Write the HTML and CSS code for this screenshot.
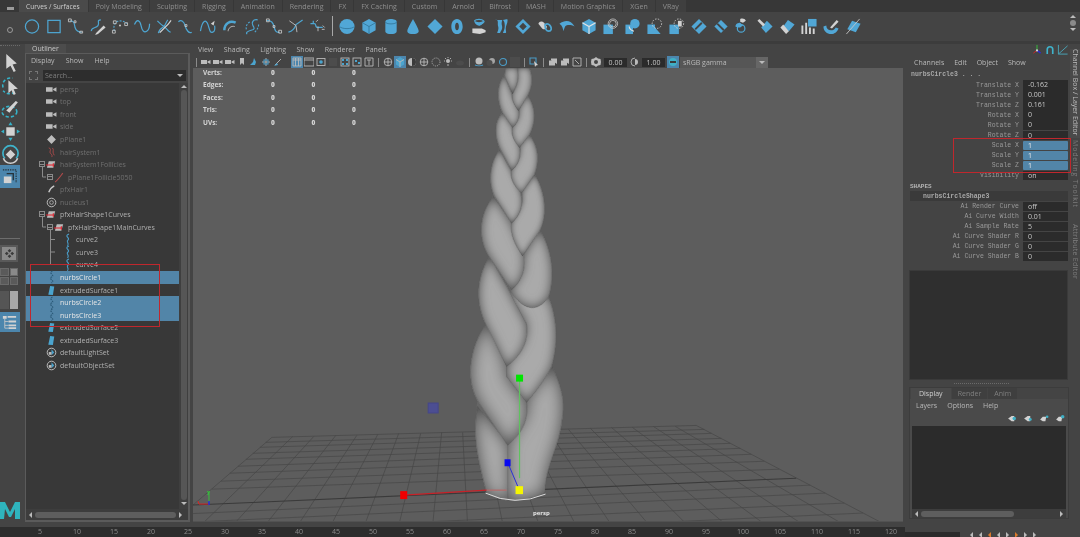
FILE: index.html
```html
<!DOCTYPE html>
<html lang="en">
<head>
<meta charset="utf-8">
<title>Maya</title>
<link rel="stylesheet" href="styles.css">
</head>
<body>
<svg class="defs" width="0" height="0" aria-hidden="true">
  <defs>
    <symbol id="cam" viewBox="0 0 10 10"><path class="g" d="M0 3h6v4H0zM6.500 4.500 9.500 3v4L6.500 5.500z"/></symbol>
    <symbol id="cv" viewBox="0 0 10 14"><path class="bl" d="M6.500 1C1 3 8 5 5.500 7 3 9 7.500 10 5 13"/></symbol>
    <symbol id="wave" viewBox="0 0 10 14"><path class="tl" d="M6 1C1 3 9 5 5 7 1 9 9 10 5 13"/></symbol>
    <symbol id="surf" viewBox="0 0 10 12"><path class="bf" d="M3.500 1 8 1.500 6.500 11 1.500 10.500z"/></symbol>
    <symbol id="setic" viewBox="0 0 12 12"><circle class="ring" cx="6" cy="6" r="4.700"/><path class="bf" d="M6 2.500 9 6 6 9z"/><path class="g" d="M3 5.500h3v3H3z"/></symbol>
    <symbol id="pfx" viewBox="0 0 12 10"><path class="g" d="M3 1.500h7L8 8.500H1z"/><path class="rd" d="M0 5.500h8M8 3.500v4"/></symbol>
    <symbol id="pick" viewBox="0 0 10 10"><path class="g" d="M1 3.500h6v5H1zM3 3V1.500h6V7"/></symbol>
    <symbol id="dot" viewBox="0 0 10 10"><rect class="gl" x="1" y="1.500" width="8" height="7"/><circle class="bf" cx="5" cy="5" r="1.800"/></symbol>
    <symbol id="wire" viewBox="0 0 10 10"><circle class="gl" cx="5" cy="5" r="3.800"/><path class="gl" d="M1 5h8M5 1v8"/></symbol>
  </defs>
</svg>
<div class="app">
  <nav class="tabs">
    <span class="tab active">Curves / Surfaces</span><span class="tab">Poly Modeling</span><span class="tab">Sculpting</span><span class="tab">Rigging</span><span class="tab">Animation</span><span class="tab">Rendering</span><span class="tab">FX</span><span class="tab">FX Caching</span><span class="tab">Custom</span><span class="tab">Arnold</span><span class="tab">Bifrost</span><span class="tab">MASH</span><span class="tab">Motion Graphics</span><span class="tab">XGen</span><span class="tab">VRay</span>
  </nav>
  <div class="shelf">
    <div class="shelf-side"><i class="menu-bars"></i><i class="gear"></i></div>
    <div class="shelf-icons">
      <svg viewBox="0 0 18 18"><circle class="s" cx="9" cy="9" r="7"/></svg>
      <svg viewBox="0 0 18 18"><rect class="s" x="2.500" y="2.500" width="13" height="13"/></svg>
      <svg viewBox="0 0 18 18"><path class="s" d="M3 3c5 0 4 4 5 7 1 3 4 5 7 5"/><path class="wt" d="M1 1h3v3H1zM7 3h2v2H7zM13 14h3v2h-3z"/></svg>
      <svg viewBox="0 0 18 18"><path class="s" d="M2 14c-1-4 5-3 7-6 2-3-2-6 3-6"/><path class="wf" d="m7 16 8-8 2 2-8 7-3 1z"/></svg>
      <svg viewBox="0 0 18 18"><path class="dash" d="M3 14C1 6 6 3 9 3s5 1 7 3"/><path class="wt" d="M1 13h3v3H1zM2 3h3v3H2zM14 5h3v3h-3z"/><circle class="wf" cx="9" cy="8" r="1"/></svg>
      <svg viewBox="0 0 18 18"><path class="s" d="M1 7c3-7 6-4 7 1s3 8 6 6 3-6 3-8"/></svg>
      <svg viewBox="0 0 18 18"><path class="s" d="M2 3c4 4 5 5 7 6s5 6 7 6M3 16c1-5 5-6 6-7s3-6 4-7"/><path class="wf" d="m4 15 9-9 3-4 1 1-3 4-9 9z"/></svg>
      <svg viewBox="0 0 18 18"><path class="s" d="M1 4c3-3 6 0 7 4s4 9 7 7"/><path class="wt" d="M8 7h2v2H8z"/></svg>
      <svg viewBox="0 0 18 18"><path class="s" d="M1 14C3 2 7 1 9 7s2 9 5 8 2-7 2-7"/><path class="wf" d="m12 6 4-3-1 5z"/></svg>
      <svg viewBox="0 0 18 18"><path class="thick" d="M3 13C3 6 9 2 15 5"/><path class="wt" d="M7 14c0-3 3-6 7-5"/></svg>
      <svg viewBox="0 0 18 18"><path class="s" d="M15 2c-5-1-7 3-5 6s2 4-2 5-6 3-4 4"/><path class="dash" d="M3 12c-1-5 3-8 5-8M16 7c0 4-3 7-5 9"/></svg>
      <svg viewBox="0 0 18 18"><path class="s" d="M1 3c5-1 7 2 8 6s2 7 6 6"/><path class="wt" d="M1 1h3v3H1zM14 13h3v3h-3zM8 8h2v2H8z"/></svg>
      <svg viewBox="0 0 18 18"><path class="s" d="M1 15c4-1 7-5 8-8l7-5"/><path class="wt" d="m2 3 7 5 1 7"/></svg>
      <svg viewBox="0 0 18 18"><path class="s" d="M1 6h4c3 0 0 4 4 4h5M4 3v3"/><path class="wt" d="M9 9v5M13 12h3M14 8l2 2M7 4l2-2"/></svg>
      <i class="shelf-sep"></i>
      <svg viewBox="0 0 18 18"><ellipse class="f" cx="9" cy="9" rx="8" ry="8"/><path class="edge" d="M1 9c3 3 13 3 16 0"/></svg>
      <svg viewBox="0 0 18 18"><path class="f" d="m9 1 7 4v8l-7 4-7-4V5z"/><path class="edge" d="m2 5 7 4 7-4M9 9v8"/></svg>
      <svg viewBox="0 0 18 18"><path class="f" d="M3 4c0-4 12-4 12 0v10c0 4-12 4-12 0z"/><path class="edge" d="M3 4c0 3 12 3 12 0"/></svg>
      <svg viewBox="0 0 18 18"><path class="f" d="M9 1c2 4 6 10 6 13 0 4-12 4-12 0C3 11 7 5 9 1z"/></svg>
      <svg viewBox="0 0 18 18"><path class="f" d="m9 1 8 8-8 8-8-8z"/></svg>
      <svg viewBox="0 0 18 18"><path class="f" fill-rule="evenodd" d="M9 1c4 0 6 4 6 8s-2 8-6 8-6-4-6-8 2-8 6-8zm0 4c-1.500 0-2 2-2 4s.5 4 2 4 2-2 2-4-.5-4-2-4z"/></svg>
      <svg viewBox="0 0 18 18"><path class="s" d="M4 3c2-2 8-2 10 0s-5 4-5 5"/><path class="f" d="M4 3c3 2 7 2 10 0 0 3-3 5-5 5S4 6 4 3z"/><path class="wf" d="M2 11h10l4 2v2l-6 2-8-1z"/></svg>
      <svg viewBox="0 0 18 18"><path class="f" d="M3 2c4-1 2 4 3 7s-1 6-1 7h3c1-3 3-4 2-8s1-6 0-6zM11 2c4-1 5-1 5 0 0 4-2 6-2 9s1 4 0 5h-3c1-3 2-4 2-8s-1-5-2-6z"/></svg>
      <svg viewBox="0 0 18 18"><path class="f" fill-rule="evenodd" d="m9 1 8 8-8 8-8-8zm0 4-4 4 4 4 4-4z"/></svg>
      <svg viewBox="0 0 18 18"><path class="wf" d="M2 6c1-3 4-3 6-1l3 4c0 3-3 4-5 2z"/><path class="s2" d="M9 7c3-2 5 0 6 2s1 5-2 5-4-3-4-7z"/></svg>
      <svg viewBox="0 0 18 18"><path class="f" d="M1 6c6-4 12-4 16 3-4-2-8-2-10 0l-2 5c0-3-1-6-4-8z"/></svg>
      <svg viewBox="0 0 18 18"><path class="f" d="m9 1 7 4v8l-7 4-7-4V5z"/><path class="w2" d="m2 5 7 4 7-4M9 9v8"/></svg>
      <svg viewBox="0 0 18 18"><path class="f" d="M1 7h10v10H1z"/><circle class="w1" cx="11" cy="6" r="5"/><circle class="w1" cx="11" cy="6" r="3.500"/></svg>
      <svg viewBox="0 0 18 18"><path class="f" d="M1 7h8v10H1z"/><circle class="f" cx="11" cy="6" r="5"/><path class="w2" d="M5 9c0 3 2 4 5 5"/></svg>
      <svg viewBox="0 0 18 18"><path class="f" d="M1 7h8v3l6 7H1z"/><circle class="dash-w" cx="11" cy="6" r="5"/></svg>
      <svg viewBox="0 0 18 18"><path class="f" d="M1 7h10v10H1z"/><path class="wf" d="M10 3h4v6h-4z"/><circle class="dash-w" cx="11" cy="6" r="5"/></svg>
      <svg viewBox="0 0 18 18"><path class="f" d="m9 1 8 8-8 8-8-8z"/><path class="bgline" d="m5 12 7-7"/></svg>
      <svg viewBox="0 0 18 18"><path class="f" d="m9 2 7 7-7 7-7-7z"/><path class="bgline" d="m5 6 7 7"/></svg>
      <svg viewBox="0 0 18 18"><path class="wf" d="M6 1c3-1 5 0 6 2L9 5 6 4z"/><path class="s" d="M3 11a4 4 0 1 0 8 0 4 4 0 0 0-8 0z"/><path class="f" d="M1 9c0-3 3-4 5-4l3 3-3 2c-2 0-4 0-5-1z"/></svg>
      <svg viewBox="0 0 18 18"><path class="f" d="m11 3 6 6-7 7-5-6z"/><path class="wf" d="m1 3 2-2 6 6-2 2z"/></svg>
      <svg viewBox="0 0 18 18"><path class="f" d="m10 2 7 5-6 7-6-5z"/><path class="wf" d="m2 10 3-3 6 7-3 3z"/></svg>
      <svg viewBox="0 0 18 18"><path class="f" d="M8 1h9v8H8z"/><path class="wf" d="M1 8h2v9H1zM5 5h2v12H5zM9 10h2v7H9zM13 11h2v6h-2z"/></svg>
      <svg viewBox="0 0 18 18"><path class="f" d="M1 9c0 5 4 8 8 8s7-3 8-6l-3-1c-1 2-3 3-5 3-3 0-5-2-5-5z"/><path class="wf" d="m8 10 7-8 2 2-7 7z"/></svg>
      <svg viewBox="0 0 18 18"><path class="f" d="m8 3 9 3-5 9-9-3z"/><path class="wt" d="M2 17 16 1"/></svg>
    </div>
    <div class="shelf-scroll"><i class="tri-up"></i><i class="knob"></i><i class="tri-down"></i></div>
  </div>

  <div class="main">
    <aside class="tools">
      <i class="grip"></i>
      <svg class="tool" viewBox="0 0 18 18"><path class="wf" d="m5 1 10 9-4 1 3 6-2 1-3-6-4 3z"/></svg>
      <svg class="tool" viewBox="0 0 18 18"><path class="tdash" d="M2 11C0 5 6 1 11 2M13 15c-3 3-8 2-11-1"/><path class="wf" d="m7 4 9 8-4 .5 2 4.500-2 1-2-4.500-3 3z"/></svg>
      <svg class="tool" viewBox="0 0 18 18"><ellipse class="tdash" cx="8" cy="12" rx="7" ry="5"/><path class="wf" d="m5 11 9-9 2 1-8 10z"/></svg>
      <svg class="tool" viewBox="0 0 18 18"><path class="wf" d="M5 5h8v8H5z"/><path class="tf" d="m9 0 2 3H7zM9 18l2-3H7zM0 9l3-2v4zM18 9l-3-2v4z"/></svg>
      <svg class="tool" viewBox="0 0 20 20"><path class="tl2" d="M4 14A8 8 0 1 1 16 14"/><path class="wl" d="M2.500 14a8 8 0 0 0 15 0"/><path class="wf" d="m10 5 5 5-5 5-5-5z"/></svg>
      <div class="tool-active"><svg viewBox="0 0 18 18"><path class="sel" d="M2 2h14v14"/><path class="sel2" d="M6 6h7v7"/><path class="wf" d="M3 9h8v7H3z"/></svg></div>
      <i class="tool-sep"></i>
      <div class="layout-btn single"><svg viewBox="0 0 12 12"><path class="dk" d="m6 1 2 2-2 2-2-2zM6 7l2 2-2 2-2-2zM1 6l2-2 2 2-2 2zM7 6l2-2 2 2-2 2z"/></svg></div>
      <div class="layout-quad"><i></i><i class="lit"></i><i></i><i></i></div>
      <div class="layout-two"><i></i><i class="lit"></i></div>
      <div class="tool-active outl"><svg viewBox="0 0 18 18"><path class="wt" d="M4 5v10M4 8h4M4 12h4M4 15h4"/><path class="wf" d="M2 2h4v3H2zM7 2h9v2H7zM8 7h8v2H8zM8 11h8v2H8zM8 14h8v2H8z"/></svg></div>
      <div class="tool-spacer"></div>
      <svg class="logo" viewBox="0 0 20 19"><path class="lg1" d="M-4 18 0 1h5l5 10 5-10h5v17h-5V8l-4 8H9L5 8l-1 10z"/></svg>
    </aside>

    <section class="outliner">
      <div class="panel-tab">Outliner</div>
      <div class="panel-body">
        <div class="menu"><span>Display</span><span>Show</span><span>Help</span></div>
        <div class="search"><i class="s-ic"></i><div class="s-field"><span>Search...</span><i class="tri-down"></i></div></div>
        <div class="list-wrap">
          <ul class="list">
            <li class="row dim i0"><svg class="ri"><use href="#cam"/></svg>persp</li>
            <li class="row dim i0"><svg class="ri"><use href="#cam"/></svg>top</li>
            <li class="row dim i0"><svg class="ri"><use href="#cam"/></svg>front</li>
            <li class="row dim i0"><svg class="ri"><use href="#cam"/></svg>side</li>
            <li class="row dim i0"><svg class="ri" viewBox="0 0 10 10"><path class="g" d="m5 1 2 2-2 2-2-2zM5 5l2 2-2 2-2-2zM1 5l2-2 2 2-2 2zM5 5l2-2 2 2-2 2z"/></svg>pPlane1</li>
            <li class="row dim i0"><svg class="ri" viewBox="0 0 10 12"><path class="rdl" d="M2 1c4 1 0 4 2 6s2 3 1 4M6 1c2 2 0 4 1 6l1 2"/></svg>hairSystem1</li>
            <li class="row dim i0"><i class="exp at40"></i><svg class="ri"><use href="#pfx"/></svg>hairSystem1Follicles</li>
            <li class="row dim i1"><i class="exp at48"></i><svg class="ri" viewBox="0 0 10 10"><path class="rdl" d="M1 9c2-1 4-4 7-8"/></svg>pPlane1Follicle5050</li>
            <li class="row dim i0"><svg class="ri" viewBox="0 0 10 12"><path class="rd2" d="M2 9C3 6 6 3 8 2"/></svg>pfxHair1</li>
            <li class="row dim i0"><svg class="ri" viewBox="0 0 12 12"><circle class="ring" cx="6" cy="6" r="4.700"/><circle class="gl" cx="6" cy="6" r="2"/></svg>nucleus1</li>
            <li class="row i0"><i class="exp at40"></i><svg class="ri"><use href="#pfx"/></svg>pfxHairShape1Curves</li>
            <li class="row i1"><i class="exp at48"></i><svg class="ri"><use href="#pfx"/></svg>pfxHairShape1MainCurves</li>
            <li class="row i2"><svg class="ri tall"><use href="#cv"/></svg>curve2</li>
            <li class="row i2"><svg class="ri tall"><use href="#cv"/></svg>curve3</li>
            <li class="row i2"><svg class="ri tall"><use href="#cv"/></svg>curve4</li>
            <li class="row i0 sel"><svg class="ri tall"><use href="#wave"/></svg>nurbsCircle1</li>
            <li class="row i0"><svg class="ri"><use href="#surf"/></svg>extrudedSurface1</li>
            <li class="row i0 sel"><svg class="ri tall"><use href="#wave"/></svg>nurbsCircle2</li>
            <li class="row i0 sel"><svg class="ri tall"><use href="#wave"/></svg>nurbsCircle3</li>
            <li class="row i0"><svg class="ri"><use href="#surf"/></svg>extrudedSurface2</li>
            <li class="row i0"><svg class="ri"><use href="#surf"/></svg>extrudedSurface3</li>
            <li class="row i0"><svg class="ri"><use href="#setic"/></svg>defaultLightSet</li>
            <li class="row i0"><svg class="ri"><use href="#setic"/></svg>defaultObjectSet</li>
          </ul>
          <div class="vscroll"><i class="tri-up"></i><i class="thumb-v"></i><i class="tri-down"></i></div>
          <svg class="tree-lines"><path d="M16.500 84V94H20M16.500 134V144H20M24.500 147V182M24.500 156.500H29M24.500 169H29M24.500 181.500H29"/></svg>
        </div>
        <div class="hscroll"><i class="tri-left"></i><i class="thumb-h"></i><i class="tri-right"></i></div>
      </div>
      <i class="annot a-outliner"></i>
    </section>

    <section class="viewport">
      <div class="vmenu"><span>View</span><span>Shading</span><span>Lighting</span><span>Show</span><span>Renderer</span><span>Panels</span></div>
      <div class="vtools">
        <i class="vsep first"></i>
        <svg class="vi"><use href="#cam"/></svg><svg class="vi"><use href="#cam"/></svg><svg class="vi"><use href="#cam"/></svg>
        <svg class="vi" viewBox="0 0 10 10"><path class="g" d="M3 1h4v7L5 6 3 8z"/></svg>
        <svg class="vi" viewBox="0 0 10 10"><path class="bf" d="m1 8 3-3 1-4 2 4-1 3z"/></svg>
        <svg class="vi" viewBox="0 0 10 10"><path class="gl" d="M5 1v8M1 5h8"/><rect class="bl" x="3" y="3" width="4" height="4"/></svg>
        <svg class="vi" viewBox="0 0 10 10"><path class="gl" d="m2 8 6-6"/><path class="bf" d="m1 9 3-3 1 2z"/></svg>
        <i class="vsep hidden"></i>
        <svg class="vi on" viewBox="0 0 10 10"><path class="gl" d="M1 1h8v8H1zM3.500 1v8M6.500 1v8M1 3h8"/></svg>
        <svg class="vi" viewBox="0 0 10 10"><path class="gl" d="M0 1h10v8H0zM0 3h10"/></svg>
        <svg class="vi"><use href="#dot"/></svg>
        <svg class="vi dimmed" viewBox="0 0 10 10"><rect class="mid" x="1" y="1" width="8" height="8"/></svg>
        <svg class="vi" viewBox="0 0 10 10"><rect class="gl" x="1" y="1" width="8" height="8"/><path class="bf" d="M2 2h2v2H2zM6 2h2v2H6zM2 6h2v2H2zM6 6h2v2H6z"/></svg>
        <svg class="vi" viewBox="0 0 10 10"><rect class="gl" x="1" y="1" width="8" height="8"/><path class="bf" d="M3 3h2v2H3zM6 5h2v2H6z"/></svg>
        <svg class="vi" viewBox="0 0 10 10"><path class="gl" d="M1 1h8v8H1z"/><path class="gl" d="M3 3h4M5 3v5"/></svg>
        <i class="vsep"></i>
        <svg class="vi"><use href="#wire"/></svg>
        <svg class="vi on" viewBox="0 0 10 10"><path class="bf" d="m5 0 4 2.500v5L5 10 1 7.500v-5z"/><path class="gl" d="m1 2.500 4 2.500 4-2.500M5 5v5"/></svg>
        <svg class="vi" viewBox="0 0 10 10"><circle class="g" cx="5" cy="5" r="4"/><path class="dk" d="M5 1a4 4 0 0 1 0 8z"/></svg>
        <svg class="vi"><use href="#wire"/></svg>
        <svg class="vi" viewBox="0 0 10 10"><circle class="gl" cx="5" cy="5" r="4" stroke-dasharray="1 1"/></svg>
        <svg class="vi" viewBox="0 0 10 10"><circle class="g" cx="5" cy="4" r="2"/><path class="gl" d="M5 0v1M1 4h1M8 4h1M2 1l1 1M8 1 7 2M4 8h2"/></svg>
        <svg class="vi dimmed" viewBox="0 0 10 10"><ellipse class="mid" cx="5" cy="6" rx="4" ry="2.500"/></svg>
        <i class="vsep"></i>
        <svg class="vi" viewBox="0 0 10 10"><circle class="g" cx="5" cy="4" r="3.500"/><path class="bl" d="M1 8c2 1 6 1 8 0"/></svg>
        <svg class="vi dimmed" viewBox="0 0 10 10"><circle class="g" cx="6" cy="4" r="3"/><circle class="mid" cx="3.500" cy="6" r="3"/></svg>
        <svg class="vi" viewBox="0 0 10 10"><circle class="bl" cx="5" cy="5" r="3.500"/></svg>
        <svg class="vi dimmed" viewBox="0 0 10 10"><rect class="mid" x="0" y="0" width="10" height="10"/></svg>
        <i class="vsep"></i>
        <svg class="vi" viewBox="0 0 10 10"><path class="bl" d="M7 7V1H1v6h4"/><path class="wf" d="m5 4 4 4-2 .5-1 1.500z"/></svg>
        <i class="vsep"></i>
        <svg class="vi"><use href="#pick"/></svg><svg class="vi"><use href="#pick"/></svg>
        <svg class="vi" viewBox="0 0 10 10"><path class="gl" d="M1 1h8v8H1zM3 3l4 4"/></svg>
        <i class="vsep"></i>
        <svg class="vi" viewBox="0 0 10 10"><path class="g" fill-rule="evenodd" d="m5 0 2 1.500L9.500 2 10 5l-.5 3L7 8.500 5 10 3 8.500.5 8 0 5l.5-3L3 1.500zM5 3a2 2 0 1 0 0 4 2 2 0 0 0 0-4z"/></svg>
        <b class="vfield">0.00</b>
        <svg class="vi gamma" viewBox="0 0 10 10"><path class="gl" d="M5 1a4 4 0 0 0 0 8"/><path class="g" d="M5 2a3 3 0 0 1 0 6z"/></svg>
        <b class="vfield second">1.00</b>
        <svg class="vi on" viewBox="0 0 10 10"><circle class="bf2" cx="5" cy="5" r="4"/><path class="dk" d="M2 4h6v2H2z"/></svg>
        <div class="gamma-sel"><span>sRGB gamma</span><i><b class="tri-down"></b></i></div>
      </div>
      <div class="view">
        <svg class="scene" viewBox="193 68 711 455" preserveAspectRatio="none">
          <defs>
            <filter id="tubeL" x="-20%" y="-20%" width="140%" height="140%" color-interpolation-filters="sRGB">
              <feGaussianBlur in="SourceAlpha" stdDeviation="8" result="b"/>
              <feComposite in="SourceAlpha" in2="b" operator="arithmetic" k2=".85" k3="-.85" result="e"/>
              <feFlood flood-color="#353535"/>
              <feComposite in2="e" operator="in" result="s"/>
              <feMerge><feMergeNode in="SourceGraphic"/><feMergeNode in="s"/></feMerge>
            </filter>
            <filter id="tubeM" x="-20%" y="-20%" width="140%" height="140%" color-interpolation-filters="sRGB">
              <feGaussianBlur in="SourceAlpha" stdDeviation="5.500" result="b"/>
              <feComposite in="SourceAlpha" in2="b" operator="arithmetic" k2=".85" k3="-.85" result="e"/>
              <feFlood flood-color="#353535"/>
              <feComposite in2="e" operator="in" result="s"/>
              <feMerge><feMergeNode in="SourceGraphic"/><feMergeNode in="s"/></feMerge>
            </filter>
            <filter id="tubeS" x="-20%" y="-20%" width="140%" height="140%" color-interpolation-filters="sRGB">
              <feGaussianBlur in="SourceAlpha" stdDeviation="3" result="b"/>
              <feComposite in="SourceAlpha" in2="b" operator="arithmetic" k2=".85" k3="-.85" result="e"/>
              <feFlood flood-color="#353535"/>
              <feComposite in2="e" operator="in" result="s"/>
              <feMerge><feMergeNode in="SourceGraphic"/><feMergeNode in="s"/></feMerge>
            </filter>
          </defs>
          <g class="grid">
            <path d="M272 439 129 562M293 438 167 560M314 438 205 558M336 437 242 557M357 437 280 555M378 436 318 553M399 435 356 551M421 435 394 549M442 434 431 548M463 434 469 546M484 433 507 544M506 432 545 542M527 432 583 540M548 431 620 539M569 431 658 537M591 430 696 535M612 429 734 533M633 429 772 531M654 428 809 530M676 428 847 528M697 427 885 526"/>
            <path d="M272 439 697 427M266 444 705 431M260 449 712 435M253 455 722 440M246 461 731 445M238 468 741 450M230 475 752 456M221 483 765 463M212 491 780 471M183 516 811 487M172 525 826 495M159 536 845 505M145 548 864 515"/>
            <path class="axis" d="M193 507 797 480"/>
          </g>
          <rect class="manip-dim" x="428.500" y="404.500" width="10" height="10"/>
          <path class="back" d="M504 75 502 113 499 150 493 197 489 258 487 325 477 408 487 495H545L552 368 548 298 539 230 534 175 529 135 527 95 520 75Z"/>
          <g class="braid">
            <path class="t-l" d="M478 408C472 440 480 465 487 495Q497 501 510 503V447Z"/>
            <path class="t-l" d="M553 368C560 385 566 400 563 418 560 450 546 465 545 495Q526 503 508 503V445L527 415V400Z"/>
            <path class="t-l" d="M488 323C468 350 466 385 480 405L508 447C520 437 530 425 527 403L507 378V365Z"/>
            <path class="t-m" d="M549 298C556 315 560 340 552 368 545 382 535 395 527 404L507 378V367C515 355 528 345 527 325L507 290Z"/>
            <path class="t-m" d="M540 230C552 250 556 275 549 298 540 312 525 315 510 291 520 280 527 268 523 257Z"/>
            <path class="t-m" d="M490 257C476 280 476 305 487 327L507 368C520 358 530 345 527 325L507 287Z"/>
            <path class="t-m" d="M494 197C479 215 478 240 490 258L512 291C525 280 527 265 523 250L511 222Z"/>
            <path class="t-s" d="M535 175C545 190 549 215 540 232L523 257C515 245 510 235 512 223 520 210 525 203 522 193Z"/>
            <path class="t-s" d="M500 150C489 165 489 185 495 197L512 224C522 215 524 205 521 193L511 170Z"/>
            <path class="t-s" d="M530 135C539 148 540 160 535 175L522 194C513 185 510 178 512 170 518 160 522 155 520 147Z"/>
            <path class="t-s" d="M503 113C494 122 495 138 501 150L512 171C520 165 522 155 520 147L513 127Z"/>
            <path class="t-s" d="M528 95C536 108 537 120 530 135L520 148C513 140 511 133 513 127 518 120 521 115 519 110Z"/>
            <path class="t-s" d="M505 75C497 85 497 100 503 113L513 128C519 123 521 115 519 110L512 93Z"/>
            <path class="t-s" d="M518 68H530C534 80 532 88 528 96L519 111C514 105 511 98 513 93 517 86 520 78 517 68Z"/>
            <path class="t-s" d="M506 68H518C520 78 518 85 513 94L505 76Z"/>
          </g>
          <path class="rim" d="M486 495Q515 509 546 496"/>
          <path class="ln-r" d="M404 497 487 492"/>
          <path class="ln-rf" d="M487 492 507 492"/>
          <path class="ln-g" d="M520 379V480"/>
          <path class="ln-b" d="M508 464 519 490"/>
          <rect class="m-r" x="400.500" y="493" width="7" height="8"/>
          <rect class="m-g" x="516.500" y="376" width="7" height="7"/>
          <rect class="m-b" x="505" y="461" width="6" height="7"/>
          <rect class="m-y" x="516" y="488" width="7.500" height="8"/>
          <path class="ax-g" d="M209 504V493"/><path class="ax-r" d="M209 506 199 506 198 503"/><path class="ax-b" d="M209 507V503"/>
        </svg>
        <div class="hud">
          <div><span>Verts:</span><b>0</b><b>0</b><b>0</b></div>
          <div><span>Edges:</span><b>0</b><b>0</b><b>0</b></div>
          <div><span>Faces:</span><b>0</b><b>0</b><b>0</b></div>
          <div><span>Tris:</span><b>0</b><b>0</b><b>0</b></div>
          <div><span>UVs:</span><b>0</b><b>0</b><b>0</b></div>
        </div>
        <span class="cam-label">persp</span>
        <span class="gizmo-y">y</span>
      </div>
    </section>

    <aside class="right">
      <div class="right-main">
        <div class="cb-icons">
          <svg viewBox="0 0 12 12"><path class="ax-g" d="M6 1v6"/><path class="ax-r" d="M6 7 2 10"/><path class="ax-b" d="m6 7 4 3"/><circle class="wf" cx="6" cy="7" r="1.200"/></svg>
          <svg viewBox="0 0 12 12"><path class="tl2" d="M3 11V6a3 3 0 0 1 6 0v5"/></svg>
          <svg viewBox="0 0 12 12"><path class="tl3" d="M1 1v10h10M1 11 11 2"/></svg>
        </div>
        <div class="menu cb-menu"><span>Channels</span><span>Edit</span><span>Object</span><span>Show</span></div>
        <div class="cb-title">nurbsCircle3 . . .</div>
        <dl class="attrs">
          <div><dt>Translate X</dt><dd>-0.162</dd></div>
          <div><dt>Translate Y</dt><dd>0.001</dd></div>
          <div><dt>Translate Z</dt><dd>0.161</dd></div>
          <div><dt>Rotate X</dt><dd>0</dd></div>
          <div><dt>Rotate Y</dt><dd>0</dd></div>
          <div><dt>Rotate Z</dt><dd>0</dd></div>
          <div class="hl"><dt>Scale X</dt><dd>1</dd></div>
          <div class="hl"><dt>Scale Y</dt><dd>1</dd></div>
          <div class="hl"><dt>Scale Z</dt><dd>1</dd></div>
          <div><dt>Visibility</dt><dd>on</dd></div>
        </dl>
        <div class="cb-shapes">SHAPES</div>
        <div class="cb-shape">nurbsCircleShape3</div>
        <dl class="attrs">
          <div><dt>Ai Render Curve</dt><dd>off</dd></div>
          <div><dt>Ai Curve Width</dt><dd>0.01</dd></div>
          <div><dt>Ai Sample Rate</dt><dd>5</dd></div>
          <div><dt>Ai Curve Shader R</dt><dd>0</dd></div>
          <div><dt>Ai Curve Shader G</dt><dd>0</dd></div>
          <div><dt>Ai Curve Shader B</dt><dd>0</dd></div>
        </dl>
        <div class="cb-empty"></div>
        <i class="grip wide"></i>
        <div class="layers">
          <div class="ltabs"><span class="lt on">Display</span><span class="lt">Render</span><span class="lt">Anim</span></div>
          <div class="lbody">
            <div class="menu lmenu"><span>Layers</span><span>Options</span><span>Help</span></div>
            <div class="licons">
              <svg viewBox="0 0 10 8"><path class="wf" d="m0 4 4-3h3v6H4z"/><circle class="bf2" cx="7" cy="4" r="2"/></svg>
              <svg viewBox="0 0 10 8"><path class="wf" d="m0 4 4-3h3v6H4z"/><circle class="bf2" cx="7" cy="5" r="1.700"/></svg>
              <svg viewBox="0 0 10 8"><path class="wf" d="m0 5 3-3h4l-1 5H3z"/><circle class="bf2" cx="8" cy="2" r="1.500"/></svg>
              <svg viewBox="0 0 10 8"><path class="wf" d="m0 5 3-3h4l-1 5H3z"/><circle class="bf2" cx="7.500" cy="2" r="2"/></svg>
            </div>
            <div class="llist"></div>
            <div class="hscroll lscroll"><i class="tri-left"></i><i class="thumb-h"></i><i class="spacer"></i><i class="tri-right"></i></div>
          </div>
        </div>
      </div>
      <div class="vtabs"><span class="vt on">Channel Box / Layer Editor</span><span class="vt">Modeling Toolkit</span><span class="vt">Attribute Editor</span></div>
      <i class="annot a-channels"></i>
    </aside>
  </div>

  <footer class="timeline">
    <div class="tl-top"></div>
    <div class="tl-strip">
      <div class="ruler"><span>5</span><span>10</span><span>15</span><span>20</span><span>25</span><span>30</span><span>35</span><span>40</span><span>45</span><span>50</span><span>55</span><span>60</span><span>65</span><span>70</span><span>75</span><span>80</span><span>85</span><span>90</span><span>95</span><span>100</span><span>105</span><span>110</span><span>115</span><span>120</span></div>
      <div class="play"><i class="pf"></i><i class="tri-left big"></i><i class="tri-left big"></i><i class="tri-left big or"></i><i class="tri-left big"></i><i class="tri-right big"></i><i class="tri-right big or"></i><i class="tri-right big"></i><i class="tri-right big"></i></div>
    </div>
  </footer>
</div>
</body>
</html>
```

FILE: styles.css
```css
* { box-sizing: border-box; }
html, body { margin: 0; padding: 0; background: #444; }
body { width: 1080px; height: 537px; overflow: hidden; font-family: "Open Sans", "Liberation Sans", sans-serif; font-size: 7px; color: #bdbdbd; }
.defs { position: absolute; }
i { display: block; font-style: normal; }
ul, dl, dd { margin: 0; padding: 0; list-style: none; }
.app { width: 1080px; height: 537px; display: flex; flex-direction: column; filter: blur(.35px); }

/* svg paint */
.s { fill: none; stroke: #4ea6d2; stroke-width: 1.300; }
.s2 { fill: none; stroke: #4ea6d2; stroke-width: 1.800; }
.thick { fill: none; stroke: #4ea6d2; stroke-width: 2.600; }
.dash { fill: none; stroke: #4ea6d2; stroke-width: 1.200; stroke-dasharray: 2 1.500; }
.dash-w { fill: none; stroke: #ccc; stroke-width: 1; stroke-dasharray: 1.500 1.500; }
.f { fill: #51a7d6; }
.edge { fill: none; stroke: #2f6f92; stroke-width: .8; }
.w1 { fill: none; stroke: #cfcfcf; stroke-width: .8; }
.w2 { fill: none; stroke: #e4e4e4; stroke-width: 1.200; }
.wt { fill: none; stroke: #c9c9c9; stroke-width: .9; }
.wf { fill: #d2d2d2; }
.wl { fill: none; stroke: #d2d2d2; stroke-width: 1.600; }
.bgline { fill: none; stroke: #444; stroke-width: 2; }
.g { fill: #bcbcbc; }
.gl { fill: none; stroke: #b9b9b9; stroke-width: .9; }
.mid { fill: #4e4e4e; }
.dk { fill: #3a3a3a; }
.bl { fill: none; stroke: #4a9cc7; stroke-width: 1.100; }
.tl { fill: none; stroke: #2b5a78; stroke-width: 1.300; }
.tl2 { fill: none; stroke: #3fb3cb; stroke-width: 1.800; }
.tl3 { fill: none; stroke: #49a7bb; stroke-width: 1; }
.tf { fill: #35b2c8; }
.tdash { fill: none; stroke: #35b2c8; stroke-width: 1.500; stroke-dasharray: 3 2; }
.bf { fill: #4ba4ce; }
.bf2 { fill: #3fb0c6; }
.rd { fill: none; stroke: #e21f2b; stroke-width: 1.200; }
.rdl { fill: none; stroke: #b04a4a; stroke-width: 1; }
.rd2 { fill: none; stroke: #c7c7c7; stroke-width: 1.500; }
.ring { fill: none; stroke: #c5c5c5; stroke-width: 1; }
.sel { fill: none; stroke: #26323a; stroke-width: 1.200; stroke-dasharray: 1.500 1; }
.sel2 { fill: none; stroke: #26323a; stroke-width: 1.400; }
.lg1 { fill: #2fb4bd; }
.ax-g { fill: none; stroke: #35c23b; stroke-width: 1; }
.ax-r { fill: none; stroke: #d92323; stroke-width: 1; }
.ax-b { fill: none; stroke: #2a2ad8; stroke-width: 1.500; }

/* triangles */
.tri-up { width: 0; height: 0; border: 3px solid transparent; border-top: 0; border-bottom: 3px solid #bbb; }
.tri-down { display: block; width: 0; height: 0; border: 3px solid transparent; border-bottom: 0; border-top: 3px solid #bbb; }
.tri-left { width: 0; height: 0; border: 3px solid transparent; border-left: 0; border-right: 3px solid #bbb; }
.tri-right { width: 0; height: 0; border: 3px solid transparent; border-right: 0; border-left: 3px solid #bbb; }

/* shelf tabs */
.tabs { height: 12px; flex: none; background: #373737; display: flex; padding-left: 19px; gap: 1px; }
.tab { height: 12px; line-height: 13px; padding: 0 7px; background: #3f3f3f; color: #8f8f8f; font-size: 7px; letter-spacing: .03px; white-space: nowrap; }
.tab.active { background: #4a4a4a; color: #cfcfcf; font-size: 6.600px; padding: 0 8px 0 7px; }
.shelf { height: 29px; flex: none; background: #444; display: flex; }
.shelf-side { width: 21px; flex: none; align-self: flex-start; margin-top: -12px; padding: 7px 0 0 7px; display: flex; flex-direction: column; gap: 17px; }
.menu-bars { width: 7px; height: 3px; background: #9a9a9a; }
.gear { width: 6px; height: 6px; border: 1.500px solid #9a9a9a; border-radius: 50%; }
.shelf-icons { display: flex; align-items: center; flex: 1; }
.shelf-icons svg { width: 22px; height: 17px; flex: none; margin-top: -1px; overflow: visible; }
.shelf-sep { width: 7px; height: 20px; flex: none; margin-top: -1px; background: linear-gradient(90deg, transparent 3px, #a8a8a8 3px, #a8a8a8 4px, transparent 4px); }
.shelf-scroll { width: 13px; flex: none; padding-top: 3px; margin-right: 1px; display: flex; flex-direction: column; align-items: center; gap: 2px; }
.knob { width: 6px; height: 6px; background: #8a8a8a; border-radius: 50%; }

.main { flex: 1; min-height: 0; display: flex; background: #444; border-top: 3px solid #3c3c3c; }

/* toolbox */
.tools { width: 25px; flex: none; display: flex; flex-direction: column; align-items: flex-start; }
.grip { width: 20px; height: 1px; margin: 1px 0 0 0; border-top: 1px dotted #6a6a6a; }
.tool { width: 19px; height: 19px; margin: 0 0 4px 1px; flex: none; overflow: visible; }
.grip + .tool { margin-top: 7px; }
.tool-active { width: 20px; height: 23px; flex: none; background: #4c86ad; padding: 3px 1px; margin-top: -3px; }
.tool-active svg { width: 17px; height: 17px; display: block; }
.tool-sep { width: 20px; height: 1px; background: #6d6d6d; margin-top: 50px; flex: none; }
.layout-btn { width: 18px; height: 17px; margin-top: 6px; background: #8a8a8a; border: 2px solid #595959; flex: none; padding: 1px 2px; }
.layout-btn svg { display: block; width: 11px; height: 11px; }
.layout-quad { width: 18px; height: 17px; margin-top: 6px; display: grid; grid-template-columns: 1fr 1fr; gap: 1px; flex: none; }
.layout-quad i { background: #5a5a5a; border: 1px solid #6a6a6a; }
.layout-quad .lit { background: #8a8a8a; }
.layout-two { width: 18px; height: 18px; margin-top: 6px; display: grid; grid-template-columns: 1fr 1fr; gap: 1px; flex: none; }
.layout-two i { background: #555; }
.layout-two .lit { background: #a8a8a8; }
.tool-active.outl { margin-top: 3px; height: 20px; padding: 2px 1px; }
.tool-spacer { flex: 1; }
.logo { width: 20px; height: 19px; margin-bottom: 2px; flex: none; overflow: hidden; }

/* outliner */
.outliner { width: 165px; flex: none; display: flex; flex-direction: column; position: relative; }
.panel-tab { width: 41px; height: 9px; background: #4c4c4c; line-height: 10px; text-align: center; color: #c8c8c8; font-size: 7px; flex: none; }
.panel-body { flex: 1; min-height: 0; border: 1px solid #5b5b5b; border-width: 1px 2px 2px 1px; display: flex; flex-direction: column; background: #444; }
.menu { display: flex; color: #b8b8b8; font-size: 7px; }
.panel-body > .menu { height: 14px; padding-left: 5px; gap: 11px; line-height: 14px; flex: none; }
.search { height: 15px; display: flex; align-items: center; flex: none; padding-left: 3px; }
.s-ic { width: 9px; height: 9px; border: 1px dashed #777; margin-right: 5px; flex: none; }
.s-field { height: 11px; flex: 1; margin-right: 2px; background: #2d2d2d; display: flex; align-items: center; justify-content: space-between; padding: 0 3px 0 2px; color: #7f7f7f; }
.list-wrap { flex: 1; min-height: 0; display: flex; background: #383838; position: relative; }
.list { flex: 1; }
.row { height: 12.550px; display: flex; align-items: center; color: #b0b0b0; font-size: 7px; white-space: nowrap; position: relative; }
.row.dim { color: #6f6f6f; }
.row.sel { background: #5285a8; color: #e6e6e6; }
.i0 { padding-left: 20px; }
.i1 { padding-left: 28px; }
.i2 { padding-left: 36px; }
.ri { width: 11px; height: 11px; margin-right: 3px; flex: none; }
.ri.tall { height: 14px; overflow: visible; }
.exp { position: absolute; top: 3px; width: 6px; height: 6px; border: 1px solid #8a8a8a; }
.exp::after { content: ""; display: block; width: 4px; height: 1px; background: #8a8a8a; margin-top: 1.500px; }
.at40 { left: 13px; }
.at48 { left: 21px; }
.vscroll { width: 9px; flex: none; display: flex; flex-direction: column; align-items: center; padding: 2px 0 4px; gap: 2px; background: #3f3f3f; }
.thumb-v { width: 6px; flex: 1; background: #565656; border-radius: 3px; }
.tree-lines { position: absolute; left: 0; top: 0; width: 100%; height: 200px; pointer-events: none; fill: none; stroke: #8a8a8a; stroke-width: 1; }
.hscroll { height: 11px; display: flex; align-items: center; gap: 3px; padding: 0 6px 0 3px; flex: none; background: #3d3d3d; }
.thumb-h { flex: 1; height: 6px; background: #5e5e5e; border-radius: 3px; }
.annot { position: absolute; border: 1px solid #c0272d; }
.a-outliner { left: 5px; top: 220px; width: 130px; height: 63px; }
.a-channels { left: 48px; top: 94px; width: 118px; height: 35px; }

/* viewport */
.viewport { flex: 1; min-width: 0; display: flex; flex-direction: column; padding: 0 2px 0 3px; }
.vmenu { height: 12px; display: flex; gap: 10.400px; padding-left: 5px; color: #b6b6b6; line-height: 12px; flex: none; font-size: 7px; }
.vtools { height: 12px; display: flex; align-items: center; flex: none; margin-left: -3px; padding-left: 5px; }
.vi { width: 12px; height: 10px; flex: none; padding: 0 1px; }
.vi.on { background: #4c86ad; height: 12px; width: 12px; }
.vi.dimmed { opacity: .8; }
.vsep { width: 1px; height: 9px; flex: none; background: #8b8b8b; margin: 0 3px; }
.vsep.first { margin: 0 3px 0 1px; }
.vsep.hidden { background: #444; }
.vfield { width: 23px; height: 9px; margin: 0 2px; background: #2b2b2b; color: #c6c6c6; font-weight: 400; line-height: 9px; text-align: center; flex: none; }
.vfield.second { margin-left: 1px; }
.gamma-sel { width: 88px; height: 11px; margin-left: 1px; background: #565656; display: flex; justify-content: space-between; align-items: center; padding-left: 3px; color: #b9b9b9; flex: none; }
.gamma-sel i { width: 12px; height: 11px; background: #666; padding: 4px 3px; }
.view { flex: 1; min-height: 0; position: relative; background: #5d5d5d; overflow: hidden; border-bottom: 1px solid #525252; }
.scene { display: block; width: 100%; height: 100%; }
.grid path { fill: none; stroke: #474747; stroke-width: .7; }
.grid .axis { stroke: #3a3a3a; stroke-width: 1.100; }
.manip-dim { fill: #4c4e92; stroke: #45468a; }
.back { fill: #666; }
.t-l, .t-m, .t-s { fill: #aaa; stroke: #5f5f5f; stroke-width: .4; }
.t-l { filter: url(#tubeL); }
.t-m { filter: url(#tubeM); }
.t-s { filter: url(#tubeS); }
.rim { fill: none; stroke: #dcdcdc; stroke-width: 1; }
.ln-r { fill: none; stroke: #c82128; stroke-width: 1.100; }
.ln-rf { fill: none; stroke: #b56a6a; stroke-width: 1.200; }
.ln-g { fill: none; stroke: #5fc25f; stroke-width: 1.200; }
.ln-b { fill: none; stroke: #2b2fd8; stroke-width: 1; }
.m-r { fill: #ee0000; }
.m-g { fill: #00e600; }
.m-b { fill: #0a0af0; }
.m-y { fill: #f6f600; }
.hud { position: absolute; left: 10px; top: -2px; color: #d4d4d4; font-weight: 700; font-size: 6.500px; }
.hud div { display: flex; height: 12.550px; align-items: center; }
.hud span { width: 68px; }
.hud b { width: 40.500px; }
.cam-label { position: absolute; left: 340px; top: 441px; color: #e6e6e6; font-size: 6px; font-weight: 700; }
.gizmo-y { position: absolute; left: 14px; top: 421px; color: #35c23b; font-size: 5px; font-weight: 700; }

/* channel box */
.right { width: 175px; flex: none; display: flex; position: relative; padding-left: 2px; }
.right-main { flex: 1; min-width: 0; padding-left: 2px; display: flex; flex-direction: column; }
.cb-icons { height: 11px; display: flex; justify-content: flex-end; gap: 1px; flex: none; }
.cb-icons svg { width: 12px; height: 11px; }
.cb-menu { height: 9px; gap: 10px; padding-left: 5px; line-height: 11px; flex: none; margin-top: 2px; }
.cb-title { height: 14px; line-height: 18px; font-family: "Liberation Mono", monospace; font-size: 6.500px; font-weight: 700; color: #a8a8a8; padding-left: 2px; flex: none; }
.attrs { flex: none; }
.attrs div { height: 10.050px; display: flex; align-items: center; justify-content: flex-end; }
.attrs dt { font-family: "Liberation Mono", monospace; font-size: 6.500px; color: #999; margin-right: 4px; white-space: nowrap; }
.attrs dd { width: 45px; height: 9.500px; background: #2b2b2b; color: #c9c9c9; line-height: 9.500px; padding-left: 5px; font-size: 7px; flex: none; margin-right: 1px; }
.attrs .hl dd { background: #5285a8; color: #eaeaea; border-radius: 1px; }
.cb-shapes { height: 9px; line-height: 11px; font-family: "Liberation Mono", monospace; font-size: 6px; font-weight: 700; color: #b5b5b5; padding-left: 1px; flex: none; margin-top: 1px; }
.cb-shape { height: 10px; margin: 1px 1px 0; background: #3a3a3a; font-family: "Liberation Mono", monospace; font-size: 6.500px; font-weight: 700; color: #a8a8a8; padding-left: 13px; line-height: 11px; flex: none; }
.cb-empty { height: 110px; margin: 8px 1px 0 0; background: #2f2f2f; border: 1px solid #3a3a3a; flex: none; }
.grip.wide { width: 55px; margin: 3px 0 0 45px; flex: none; }
.layers { flex: 1; min-height: 0; display: flex; flex-direction: column; margin: 3px 0 3px; border: 1px solid #3c3c3c; }
.ltabs { display: flex; height: 11px; padding-left: 1px; flex: none; gap: 1px; }
.lt { padding: 0 6px; line-height: 12px; background: #3f3f3f; color: #7f7f7f; }
.lt.on { background: #4a4a4a; color: #d0d0d0; padding: 0 8px; }
.lbody { flex: 1; min-height: 0; display: flex; flex-direction: column; background: #4a4a4a; padding: 0 2px; }
.lmenu { height: 11px; gap: 10px; padding-left: 4px; line-height: 12px; flex: none; margin-top: 1px; }
.licons { height: 15px; display: flex; justify-content: flex-end; align-items: center; gap: 7px; flex: none; padding-right: 1px; }
.licons svg { width: 9px; height: 7px; }
.llist { flex: 1; min-height: 0; background: #2b2b2b; }
.lscroll { background: #3d3d3d; height: 9px; padding-right: 3px; }
.lscroll .spacer { width: 40px; flex: none; }
.vtabs { width: 10px; flex: none; display: flex; flex-direction: column; gap: 2px; padding-top: 5px; margin-left: 1px; }
.vt { writing-mode: vertical-rl; font-size: 7px; color: #7c7c7c; line-height: 10px; white-space: nowrap; padding-bottom: 3px; }
.vt.on { color: #bdbdbd; background: #4a4a4a; }
.vt + .vt { letter-spacing: .85px; }
.vt + .vt + .vt { margin-top: 11px; letter-spacing: .3px; }

/* timeline */
.timeline { height: 15px; flex: none; display: flex; flex-direction: column; background: #444; }
.tl-top { height: 5px; flex: none; }
.tl-strip { flex: 1; display: flex; }
.ruler { width: 905px; background: #2d2d2d; display: flex; padding-left: 21.500px; line-height: 9px; color: #8c8c8c; font-size: 7px; }
.ruler span { width: 37px; text-align: center; flex: none; }
.play { flex: 1; display: flex; align-items: flex-end; gap: 6px; overflow: hidden; }
.pf { width: 55px; height: 5px; background: #2b2b2b; margin-right: 4px; }
.tri-left.big, .tri-right.big { margin-bottom: -1px; }
.tri-left.or { border-right-color: #d9792b; }
.tri-right.or { border-left-color: #d9792b; }
```
